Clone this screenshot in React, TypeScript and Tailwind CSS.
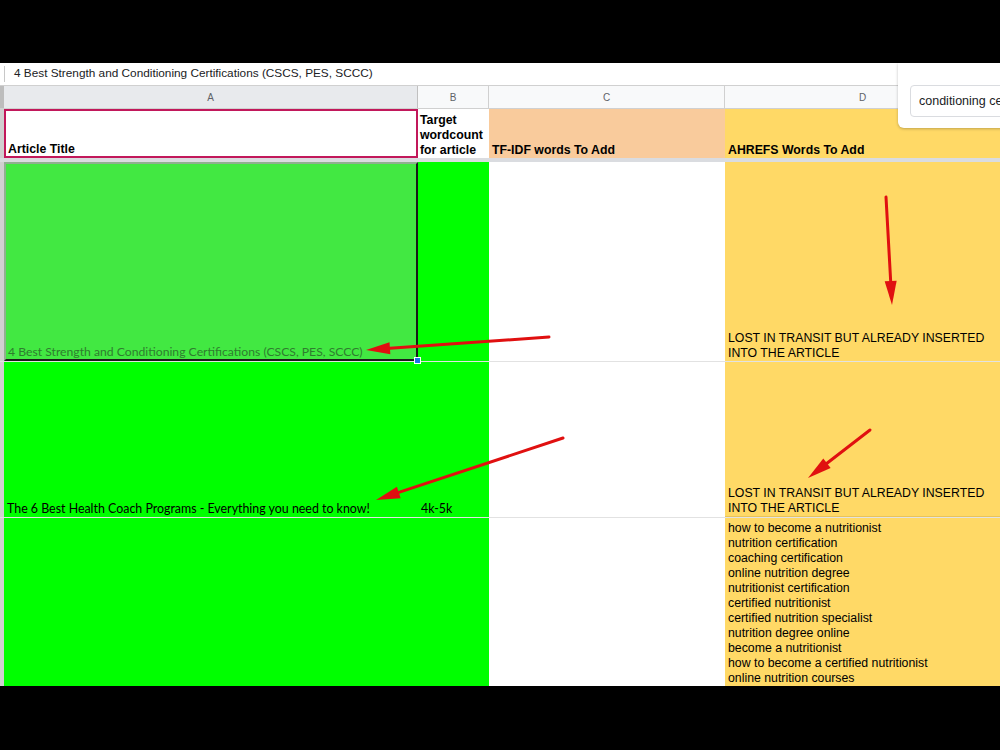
import React from "react";

const list = [
  "how to become a nutritionist",
  "nutrition certification",
  "coaching certification",
  "online nutrition degree",
  "nutritionist certification",
  "certified nutritionist",
  "certified nutrition specialist",
  "nutrition degree online",
  "become a nutritionist",
  "how to become a certified nutritionist",
  "online nutrition courses",
];

const arial = { fontFamily: '"Liberation Sans", Arial, sans-serif' };
const cal = { fontFamily: 'Lato, "Open Sans", sans-serif' };

function Arrow({ x1, y1, x2, y2 }: { x1: number; y1: number; x2: number; y2: number }) {
  const dx = x2 - x1;
  const dy = y2 - y1;
  const len = Math.sqrt(dx * dx + dy * dy);
  const ux = dx / len;
  const uy = dy / len;
  const hl = 24;
  const hw = 6;
  const bx = x2 - ux * hl;
  const by = y2 - uy * hl;
  const px = -uy * hw;
  const py = ux * hw;
  return (
    <g>
      <line x1={x1} y1={y1} x2={bx} y2={by} stroke="#e01010" strokeWidth={3} strokeLinecap="round" />
      <polygon points={`${x2},${y2} ${bx + px},${by + py} ${bx - px},${by - py}`} fill="#e01010" />
    </g>
  );
}

export default function App() {
  return (
    <div className="relative w-[1000px] h-[750px] bg-black overflow-hidden" style={arial}>
      <div className="h-[63px]" />
      <div className="h-[623px] bg-white flex flex-col">
        {/* formula bar */}
        <div className="h-[23px] flex items-center border-b border-[#d0d0d0]">
          <div className="w-px h-[16px] bg-[#c8c8c8] ml-[4px]" />
          <span className="ml-[9px] text-[11.8px] text-[#202124]">
            4 Best Strength and Conditioning Certifications (CSCS, PES, SCCC)
          </span>
        </div>
        {/* column headers */}
        <div className="h-[22px] flex text-[10px] text-[#5f6368] bg-[#f8f9fa]">
          <div className="w-[4px] bg-[#bdbdbd]" />
          <div className="w-[414px] bg-[#e8eaed] border-r border-[#c0c0c0] flex items-center justify-center">A</div>
          <div className="w-[71px] border-r border-[#d0d0d0] flex items-center justify-center">B</div>
          <div className="w-[236px] border-r border-[#d0d0d0] flex items-center justify-center">C</div>
          <div className="w-[275px] flex items-center justify-center">D</div>
        </div>
        {/* header row */}
        <div className="h-[50px] flex text-[12.3px] font-bold text-black leading-[15px] border-t border-[#d0d0d0]">
          <div className="w-[4px] bg-[#d0d0d0]" />
          <div className="w-[414px] border-2 border-[#c2185b] flex items-end px-[2px] leading-[13px]">Article Title</div>
          <div className="w-[71px] flex items-end px-[2px] pb-0">
            Target wordcount for article
          </div>
          <div className="w-[236px] bg-[#f9cb9c] flex items-end px-[3px] pb-0">TF-IDF words To Add</div>
          <div className="w-[275px] bg-[#ffd966] flex items-end px-[3px] pb-0">AHREFS Words To Add</div>
        </div>
        <div className="h-[4px] bg-[#dadce0]" />
        {/* row 1 */}
        <div className="h-[200px] flex border-b border-[#e2e2e2]">
          <div className="w-[4px] bg-[#d0d0d0]" />
          <div className="relative w-[414px] bg-[#42e842] border-2 border-[#1a1a1a] border-l-[#8fb08f] border-t-[#8fb08f] flex items-end px-[2px] pb-[1px]">
            <span className="text-[12.2px] leading-[12px] text-[#2f7d2f]" style={cal}>
              4 Best Strength and Conditioning Certifications (CSCS, PES, SCCC)
            </span>
            <div className="absolute right-[-5px] bottom-[-5px] w-[7px] h-[7px] bg-[#1a73e8] border border-white" />
          </div>
          <div className="w-[71px] bg-[#00ff00]" />
          <div className="w-[236px] bg-white" />
          <div className="w-[275px] bg-[#ffd966] flex items-end px-[3px] pb-0 text-[12.3px] leading-[15px] text-black">
            LOST IN TRANSIT BUT ALREADY INSERTED INTO THE ARTICLE
          </div>
        </div>
        {/* row 2 */}
        <div className="h-[156px] flex border-b border-[#e2e2e2]">
          <div className="w-[4px] bg-[#d0d0d0]" />
          <div className="w-[414px] bg-[#00ff00] flex items-end px-[3px] pb-[2px]">
            <span className="text-[12.4px] leading-[12px] text-black" style={cal}>
              The 6 Best Health Coach Programs - Everything you need to know!
            </span>
          </div>
          <div className="w-[71px] bg-[#00ff00] flex items-end px-[3px] pb-[2px]">
            <span className="text-[12.4px] leading-[12px] text-black" style={cal}>4k-5k</span>
          </div>
          <div className="w-[236px] bg-white" />
          <div className="w-[275px] bg-[#ffd966] flex items-end px-[3px] pb-0 text-[12.3px] leading-[15px] text-black border-b border-[#e8c45a]">
            LOST IN TRANSIT BUT ALREADY INSERTED INTO THE ARTICLE
          </div>
        </div>
        {/* row 3 */}
        <div className="flex-1 flex">
          <div className="w-[4px] bg-[#d0d0d0]" />
          <div className="w-[414px] bg-[#00ff00]" />
          <div className="w-[71px] bg-[#00ff00]" />
          <div className="w-[236px] bg-white" />
          <div className="w-[275px] bg-[#ffd966] px-[3px] pt-[3px] text-[12.3px] leading-[15px] text-black">
            {list.map((t) => (
              <div key={t}>{t}</div>
            ))}
          </div>
        </div>
      </div>

      {/* search popup */}
      <div className="absolute left-[898px] top-[63px] w-[110px] h-[65px] bg-white rounded-bl-[6px] shadow-[0_1px_3px_rgba(0,0,0,0.25)]">
        <div className="absolute left-[12px] top-[22px] w-[110px] h-[32px] border border-[#dadce0] rounded-[4px] flex items-center pl-[8px] text-[12.5px] text-[#202124] whitespace-nowrap overflow-hidden">
          conditioning ce
        </div>
      </div>

      {/* arrows */}
      <svg className="absolute inset-0 pointer-events-none" width={1000} height={750}>
        <Arrow x1={549} y1={337} x2={366} y2={350} />
        <Arrow x1={886} y1={197} x2={892} y2={305} />
        <Arrow x1={563} y1={438} x2={376} y2={500} />
        <Arrow x1={870} y1={430} x2={808} y2={478} />
      </svg>
    </div>
  );
}
